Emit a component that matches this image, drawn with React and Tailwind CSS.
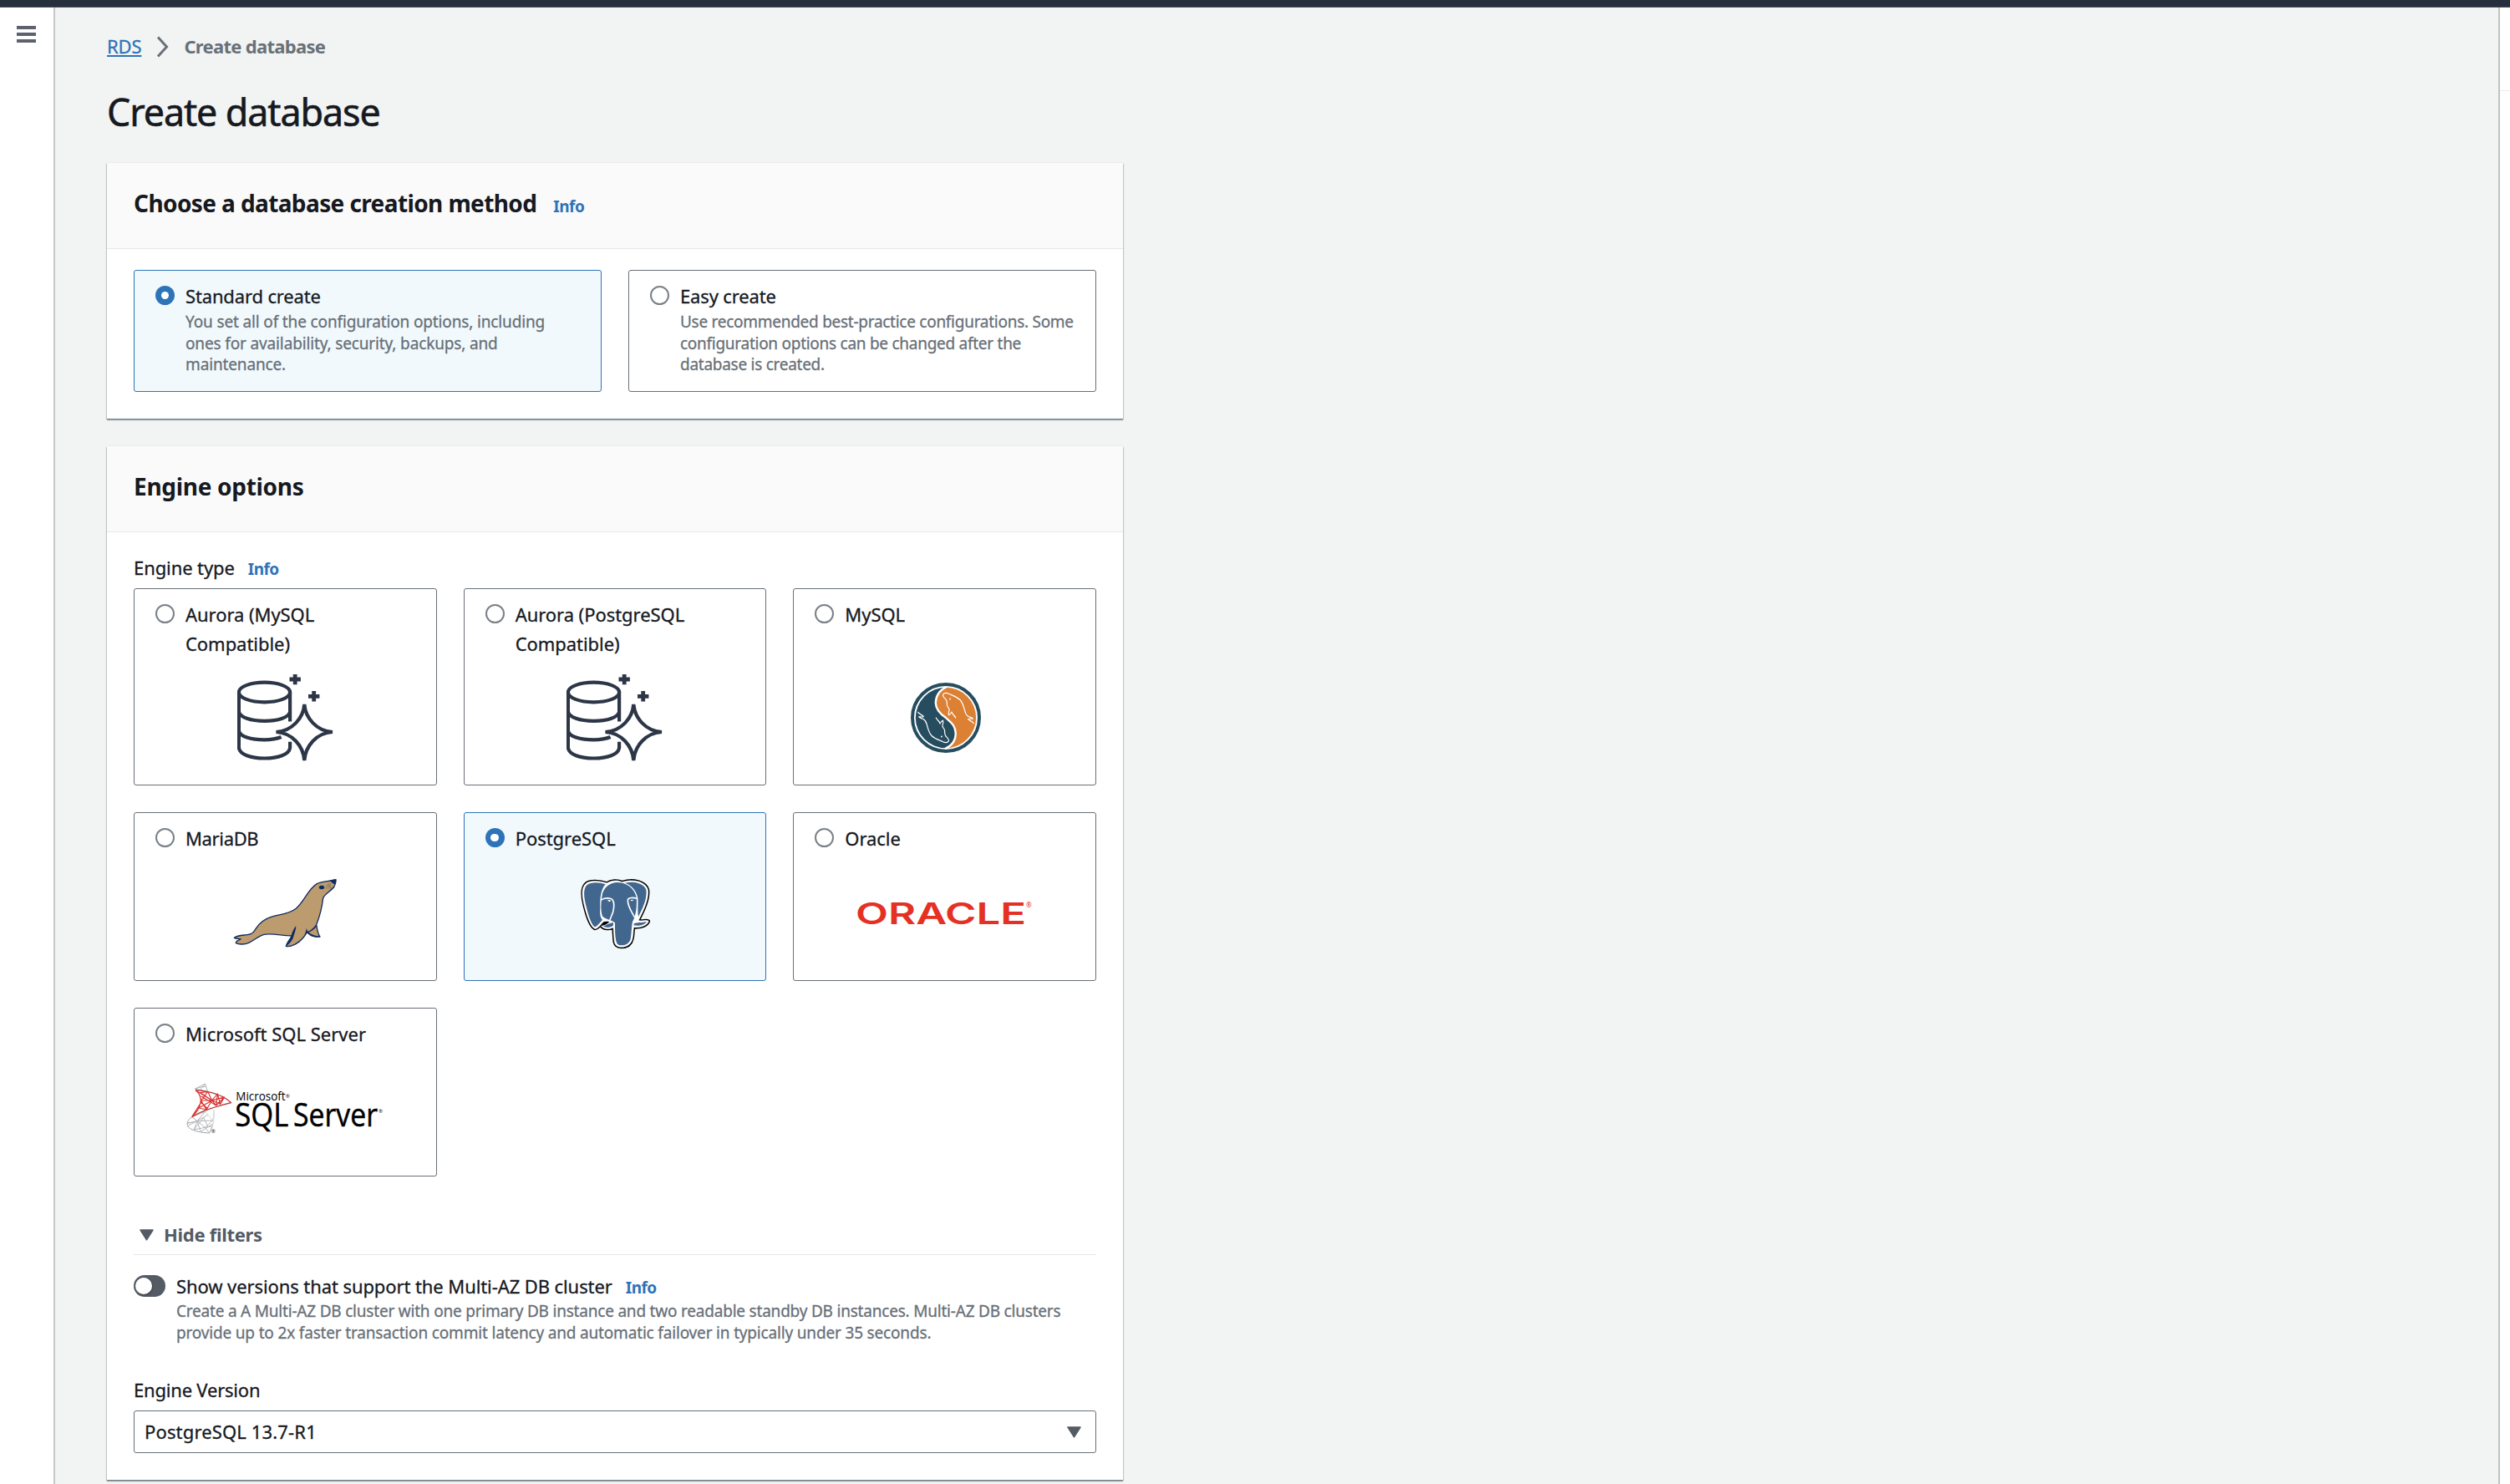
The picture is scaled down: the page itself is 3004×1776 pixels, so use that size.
import React from "react";

function Radio({ checked }) {
  return checked ? (
    <span className="mt-[5px] flex size-[23px] shrink-0 items-center justify-center rounded-full bg-[#2e73b8]">
      <span className="size-[9.5px] rounded-full bg-white" />
    </span>
  ) : (
    <span className="mt-[5px] size-[23px] shrink-0 rounded-full border-2 border-[#798087] bg-white" />
  );
}

function Tile({ checked, label, tracking = "tracking-[-0.05px]", description, children, className = "" }) {
  return (
    <div
      className={`flex flex-col rounded-[3px] border pt-[13px] ${
        checked ? "border-[#2e73b8] bg-[#f1f9fd]" : "border-[#687078] bg-white"
      } ${className}`}
    >
      <div className="flex gap-[13px] pr-5 pl-[25px]">
        <Radio checked={checked} />
        <div className="whitespace-nowrap">
          {label.map((line) => (
            <div key={line} className={`text-[22px] leading-[35px] [-webkit-text-stroke:0.3px] ${tracking}`}>
              {line}
            </div>
          ))}
          {description}
        </div>
      </div>
      {children && (
        <div className="mt-auto mb-[28px] flex h-[104px] items-center justify-center">{children}</div>
      )}
    </div>
  );
}

function Info({ className = "" }) {
  return (
    <span
      className={`text-[19px] font-bold tracking-[-0.5px] text-[#2e73b8] [-webkit-text-stroke:0px] ${className}`}
    >
      Info
    </span>
  );
}

function Panel({ title, titleClass, info, className = "", children }) {
  return (
    <section
      className={`w-[1216px] bg-white shadow-[0_2px_1px_0_rgba(0,28,36,0.32),1px_1px_1px_0_rgba(0,28,36,0.16),-1px_1px_1px_0_rgba(0,28,36,0.16),0_-1px_0_0_#eaeded] ${className}`}
    >
      <header className="h-[103px] border-b border-[#e6e8e8] bg-[#fafafa] px-8 pt-[30.6px] leading-[35px]">
        <span className={`text-[28px] font-bold ${titleClass}`}>{title}</span>
        {info && <Info className="ml-[20px]" />}
      </header>
      <div className="px-8 pt-[25px] pb-[32px]">{children}</div>
    </section>
  );
}

function AuroraIcon() {
  return (
    <svg width="115" height="104" viewBox="0 0 115 104" fill="none" stroke="#2c3646" strokeWidth="4.2">
      <ellipse cx="32.5" cy="21.5" rx="30.6" ry="11.8" />
      <path d="M1.9 21V88C3 96 16 100.500 32.500 100.500S62 96 63.100 88V80.700" />
      <path d="M63.100 21V56.500" />
      <path d="M1.900 44.500C3 51.500 16 55.800 32.500 55.800S61 52 63.100 45" />
      <path d="M1.900 67.500C3 74.500 16 78.300 32.500 78.300C41 78.300 48 77 52.600 75" />
      <path d="M80.300 36C79 52 66 68 46.500 69C66 70 79 86 80.300 103C81.600 86 94.600 70 114 69C94.600 68 81.600 52 80.300 36Z" />
      <path strokeWidth="4.800" d="M62.500 6H75.900M69.200 0V12.300M85 26.300H98.400M91.700 20V32.500" />
    </svg>
  );
}

function Dolphin() {
  return (
    <path d="M38.600 14.300C39.500 12 43 12 45.500 13.200C50 15.500 55 16.500 59 20.500C63 25 63.500 30 64.800 34C65.500 37.500 66.500 39 69 40.500C72 41.500 73.500 41.500 74.400 43.200C72 43.200 70 42.500 68.600 43.400C70 45.500 74 46 75.300 48.700M38.600 14.300C38 16.500 40.500 18.500 42 20C44.500 23 42.500 26 44 28.500C45 30 46.500 30.500 46 33C45.500 35.500 44.500 37 45.500 38.800C47 38.500 48 36.500 49 35C49.500 38 52.500 39 53.700 42" />
  );
}

function MySqlIcon() {
  return (
    <svg className="ml-[2px]" width="84" height="84" viewBox="0 0 84 84" fill="none">
      <circle cx="42" cy="42" r="40" fill="#fff" stroke="#264d5f" strokeWidth="4" />
      <path
        fill="#264d5f"
        d="M42 5.800A36.200 36.200 0 0 0 42 78.200C50 76 54 68 53.700 60C53.200 50 47 47 42 42C36 38 30 33 29.800 24.300C30 16 34 9 42 5.800Z"
      />
      <path
        fill="#dc8034"
        d="M42 5.800A36.200 36.200 0 0 1 42 78.200C50 76 54 68 53.700 60C53.200 50 47 47 42 42C36 38 30 33 29.800 24.300C30 16 34 9 42 5.800Z"
      />
      <path
        stroke="#fff"
        strokeWidth="2.400"
        d="M43 5C34 9 30 16 29.800 24.300C30 33 36 38 42 42C47 47 53.200 50 53.700 60C54 68 50 75 41 79"
      />
      <g stroke="#fff" strokeWidth="1.200" strokeLinejoin="round" strokeLinecap="round">
        <Dolphin />
        <circle cx="47" cy="19.500" r="0.400" />
        <g transform="rotate(180 42 42)">
          <Dolphin />
          <circle cx="47" cy="19.500" r="0.400" />
        </g>
      </g>
    </svg>
  );
}

function MariaDbIcon() {
  return (
    <svg width="126.700" height="85.300" viewBox="386 270 380 256" fill="none">
      <path
        fill="#bc9b6e"
        stroke="#0f2b5f"
        strokeWidth="4"
        strokeLinejoin="round"
        d="M757 279C735 284 705 285 690 293C660 310 645 355 615 382C590 402 560 402 525 412C500 420 482 435 470 455C462 470 455 475 440 476C425 478 405 477 393 487C400 491 410 489 416 492C408 496 398 497 399 506C410 512 430 511 445 505C465 497 480 480 500 475C530 470 565 480 600 480C592 495 582 505 579 518C600 520 625 505 638 490C645 482 650 475 655 465C662 475 672 485 701 483C696 478 692 465 688 440C700 410 708 380 712 345C716 330 740 320 752 303C756 296 758 288 757 279Z"
      />
      <path
        fill="#0f2b5f"
        d="M615 444C606 455 600 468 597 482C590 495 582 505 578 519C586 511 598 503 604 488C608 473 615 460 615 444ZM652 450C652 458 650 468 645 478L655 470C665 480 680 488 702 485C688 479 670 477 660 468C672 464 682 455 689 445L686 440C676 454 664 462 657 465C655 460 652 455 652 450ZM760 277C750 277 740 279 733 283C743 283 742 293 757 295C759 289 760 283 760 277Z"
      />
      <ellipse cx="707" cy="306" rx="9.500" ry="6.500" fill="#0f2b5f" />
      <path stroke="#7f7868" strokeWidth="2.500" d="M735 291C727 297 723 303 723 311M738 292C732 299 730 306 730 313M740 294C737 300 736 308 739 314M728 297L744 309" />
    </svg>
  );
}

const elephantShape =
  "M561 292C535 283 500 281 486 293C468 308 472 340 480 372C489 410 503 448 517 455C527 457 536 443 549 430L562 428L570 431C560 442 550 445 541 446C550 458 572 458 584 450C586 470 586 485 588 502C591 516 600 521 613 521C634 521 648 510 652 493C656 478 655 465 657 450C680 452 705 446 711 428C700 422 690 430 674 426C690 395 713 350 708 315C700 288 660 275 615 288C600 280 575 282 561 292Z";

function PostgresIcon() {
  return (
    <svg width="86" height="88" viewBox="461 268 258 264" fill="none" strokeLinejoin="round" strokeLinecap="round">
      <path d={elephantShape} fill="#000" stroke="#000" strokeWidth="11" />
      <path d={elephantShape} fill="#fff" stroke="#fff" strokeWidth="2" />
      <g fill="#41678f">
        <path d="M556 296C535 288 503 287 490 298C475 311 478 340 486 372C494 407 506 442 517 449C526 448 533 436 545 424C535 412 536 395 537 380C536 350 538 315 556 296Z" />
        <path d="M626 291C660 284 693 292 702 315C706 345 692 378 674 412C670 395 674 370 672 345C668 322 652 300 626 291Z" />
        <path d="M595 289C570 290 545 310 543 342C538 370 540 400 546 412C558 422 575 422 590 434C590 460 590 480 594 500C598 514 605 515 613 515C630 515 642 507 646 492C650 470 649 450 653 430C660 420 665 400 667 380C668 365 668 350 667 343C660 312 635 289 595 289Z" />
        <path d="M584 434C575 432 560 442 548 446C556 454 578 452 584 443ZM659 436C675 432 690 434 704 430C698 442 675 447 657 443Z" />
      </g>
      <g stroke="#fff" strokeWidth="5">
        <path d="M541 352C550 344 572 344 580 350C588 360 587 380 583 395C580 405 575 413 572 424" />
        <path d="M668 347C655 342 637 344 636 352C635 375 650 395 660 413" />
      </g>
      <path d="M549 432L570 430C563 437 556 438 541 443Z" fill="#000" />
      <path d="M562 353L573 352C576 355 574 359 570 359ZM645 352L656 351C654 357 649 358 645 352Z" fill="#fff" />
    </svg>
  );
}

function OracleLogo() {
  return (
    <svg width="214" height="50" viewBox="0 0 214 50" fill="#e43124">
      <text x="0" y="38" fontFamily="Inter, sans-serif" fontSize="36" fontWeight="600" textLength="204" lengthAdjust="spacingAndGlyphs">
        ORACLE
      </text>
      <text x="204" y="18" fontFamily="Noto Sans, sans-serif" fontSize="8">
        ®
      </text>
    </svg>
  );
}

function SqlServerLogo() {
  return (
    <svg className="-mt-[4px] ml-[3px]" width="242" height="90" viewBox="220 267 726 270" fill="none">
      <g stroke="#b3b7ba" strokeWidth="3" strokeLinejoin="round">
        <path d="M253 337L291 318L299 345M253 337C265 333 280 328 293 328M272 341L291 318M253 337L299 345" />
        <path stroke="#d5d7d8" d="M322 412C325 450 318 475 306 495M290 418L318 450L322 412M300 414L290 418" />
        <path stroke="#9fa4a8" d="M244 437C226 448 222 464 231 474C245 488 275 493 306 495" />
        <path d="M244 437L290 418L262 452L318 450L290 475L262 452L226 460L262 452L250 483L290 475L306 495L316 470L290 475M250 483L285 440L300 470M244 437L262 452L275 490L318 462M228 470L300 430" />
      </g>
      <g stroke="#d8322f" strokeWidth="3.500" strokeLinejoin="round">
        <path stroke="#b5282c" d="M256 341C310 345 355 357 384 386C335 398 280 412 243 437" />
        <path d="M256 341C278 358 280 378 268 405C262 418 252 428 243 437M256 341L315 378L274 350L300 346L315 378L335 354L330 396L315 378L276 378L300 346M276 378L295 411L315 378L268 405L295 411M315 378L360 366L345 391L315 378M335 354L345 391M276 362L330 396M243 437L276 385L300 408M360 366L330 396" />
      </g>
      <g fill="#000" fontFamily="Open Sans, sans-serif">
        <text x="401" y="379" fontSize="43" textLength="178" lengthAdjust="spacingAndGlyphs">
          Microsoft
        </text>
        <g stroke="#000" strokeWidth="1.500">
          <text x="398" y="472" fontSize="116" textLength="192" lengthAdjust="spacingAndGlyphs">
            SQL
          </text>
          <text x="607" y="472" fontSize="116" textLength="303" lengthAdjust="spacingAndGlyphs">
            Server
          </text>
        </g>
        <text x="579" y="368" fontSize="18">
          ®
        </text>
        <text x="913" y="424" fontSize="18">
          ®
        </text>
        <text x="312" y="495" fontSize="18">
          ®
        </text>
      </g>
    </svg>
  );
}

function Caret() {
  return (
    <svg width="17" height="14" viewBox="0 0 17 14" fill="#545b64" stroke="#545b64" strokeWidth="1.500" strokeLinejoin="round">
      <path d="M1 1H16L8.500 12.800Z" />
    </svg>
  );
}

const engines = [
  { label: ["Aurora (MySQL", "Compatible)"], icon: <AuroraIcon /> },
  { label: ["Aurora (PostgreSQL", "Compatible)"], icon: <AuroraIcon /> },
  { label: ["MySQL"], icon: <MySqlIcon /> },
  { label: ["MariaDB"], icon: <MariaDbIcon />, tracking: "tracking-[-0.35px]" },
  { label: ["PostgreSQL"], icon: <PostgresIcon />, checked: true },
  { label: ["Oracle"], icon: <OracleLogo /> },
  { label: ["Microsoft SQL Server"], icon: <SqlServerLogo />, tracking: "tracking-[0px]" },
];

export default function App() {
  return (
    <div className="flex h-[1776px] w-full flex-col overflow-hidden bg-[#f2f4f3] font-['Noto_Sans',sans-serif] text-[#16191f]">
      <div className="h-[9px] shrink-0 border-b border-[#414d5c] bg-[#262f3e]" />
      <div className="flex min-h-0 flex-1">
        <aside className="flex w-[66px] shrink-0 flex-col gap-[4px] border-r-2 border-[#c6c8c8] bg-white pt-[22px] pl-[20px]">
          <span className="h-[4px] w-[23px] bg-[#5c636c]" />
          <span className="h-[4px] w-[23px] bg-[#5c636c]" />
          <span className="h-[4px] w-[23px] bg-[#5c636c]" />
        </aside>

        <main className="flex-1 pt-[29px] pl-[62px]">
          <nav className="flex h-[35px] items-center text-[22px] leading-[35px]">
            <a className="tracking-[-0.15px] text-[#2e73b8] underline decoration-2 underline-offset-[2px] [-webkit-text-stroke:0.3px]">
              RDS
            </a>
            <svg className="mr-[17px] ml-[18px]" width="16" height="26" viewBox="0 0 16 26" fill="none" stroke="#687078" strokeWidth="3">
              <path d="M2 1.500L12.500 13L2 24.500" />
            </svg>
            <span className="font-bold tracking-[-0.7px] text-[#687078]">Create database</span>
          </nav>
          <h1 className="mt-[33px] text-[44.8px] leading-[56px] tracking-[-1.08px] [-webkit-text-stroke:0.6px]">
            Create database
          </h1>

          <Panel title="Choose a database creation method" titleClass="tracking-[-0.6px]" info className="mt-[33px]">
            <div className="grid grid-cols-2 gap-8">
              <Tile
                checked
                label={["Standard create"]}
                tracking="tracking-[-0.15px]"
                className="h-[146px]"
                description={
                  <p className="pt-px text-[19px] leading-[25.6px] tracking-[-0.14px] text-[#687078] [-webkit-text-stroke:0.3px]">
                    You set all of the configuration options, including
                    <br />
                    ones for availability, security, backups, and
                    <br />
                    maintenance.
                  </p>
                }
              />
              <Tile
                label={["Easy create"]}
                tracking="tracking-[-0.15px]"
                className="h-[146px]"
                description={
                  <p className="pt-px text-[19px] leading-[25.6px] tracking-[-0.27px] text-[#687078] [-webkit-text-stroke:0.3px]">
                    Use recommended best-practice configurations. Some
                    <br />
                    configuration options can be changed after the
                    <br />
                    database is created.
                  </p>
                }
              />
            </div>
          </Panel>

          <Panel title="Engine options" titleClass="tracking-[-0.3px]" className="mt-[33px]">
            <div className="h-[35px] text-[22px] leading-[35px] tracking-[-0.1px] [-webkit-text-stroke:0.3px]">
              Engine type
              <Info className="ml-[16px]" />
            </div>
            <div className="mt-[7px] grid grid-cols-3 grid-rows-[236px_202px_202px] gap-8">
              {engines.map((e) => (
                <Tile key={e.label.join(" ")} label={e.label} checked={e.checked} tracking={e.tracking}>
                  {e.icon}
                </Tile>
              ))}
            </div>

            <div className="mt-[52px] flex items-center gap-[12px] border-b border-[#e6e8e8] pb-[6px] pl-[7px] text-[22px] leading-[35px] font-bold tracking-[-0.3px] text-[#545b64]">
              <Caret />
              Hide filters
            </div>

            <div className="mt-[20px] flex gap-[13px]">
              <span className="mt-[4px] flex h-[26px] w-[38px] shrink-0 items-center rounded-full bg-[#545b64] pl-[2px]">
                <span className="size-[20px] rounded-full bg-white shadow-[1px_1px_2px_rgba(0,0,0,0.3)]" />
              </span>
              <div className="whitespace-nowrap">
                <div className="h-[35px] text-[22px] leading-[35px] tracking-[-0.09px] [-webkit-text-stroke:0.3px]">
                  Show versions that support the Multi-AZ DB cluster
                  <Info className="ml-[16px]" />
                </div>
                <p className="text-[19px] leading-[25.6px] tracking-[-0.205px] text-[#687078] [-webkit-text-stroke:0.3px]">
                  Create a A Multi-AZ DB cluster with one primary DB instance and two readable standby DB instances. Multi-AZ DB clusters
                  <br />
                  <span className="tracking-[-0.17px]">
                    provide up to 2x faster transaction commit latency and automatic failover in typically under 35 seconds.
                  </span>
                </p>
              </div>
            </div>

            <div className="mt-[38px] text-[22px] leading-[35px] tracking-[-0.2px] [-webkit-text-stroke:0.3px]">Engine Version</div>
            <div className="mt-[7px] flex h-[51px] items-center justify-between rounded-[3px] border border-[#687078] bg-white pr-[17px] pl-[12px] text-[22px] leading-[35px] tracking-[0.15px] [-webkit-text-stroke:0.3px]">
              PostgreSQL 13.7-R1
              <Caret />
            </div>
          </Panel>
        </main>

        <aside className="w-[14px] shrink-0 border-l-2 border-[#c0c3c3] bg-white">
          <div className="h-[100px] border-b border-[#eaeded]" />
        </aside>
      </div>
    </div>
  );
}
